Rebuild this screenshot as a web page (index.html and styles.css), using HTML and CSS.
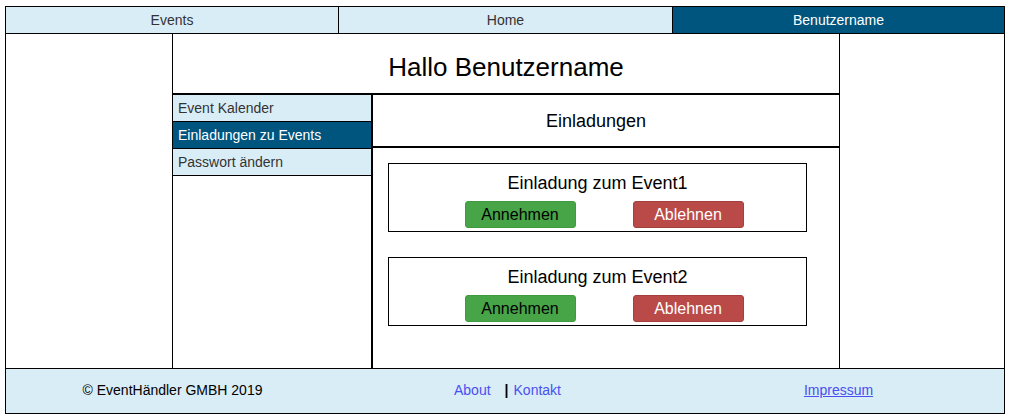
FILE: index.html
```html
<!DOCTYPE html>
<html lang="de">
<head>
<meta charset="utf-8">
<title>Einladungen</title>
<link rel="stylesheet" href="styles.css">
</head>
<body>
<div class="page">
  <nav class="topnav">
    <a class="nav-item">Events</a>
    <a class="nav-item">Home</a>
    <a class="nav-item active">Benutzername</a>
  </nav>
  <div class="main">
    <div class="side-col"></div>
    <div class="center">
      <h1 class="greeting">Hallo Benutzername</h1>
      <div class="body-row">
        <div class="sidebar">
          <a class="menu-item">Event Kalender</a>
          <a class="menu-item active">Einladungen zu Events</a>
          <a class="menu-item">Passwort ändern</a>
        </div>
        <div class="content">
          <h2 class="content-title">Einladungen</h2>
          <div class="cards">
            <div class="card">
              <div class="card-title">Einladung zum Event1</div>
              <div class="card-actions">
                <button class="btn btn-accept">Annehmen</button>
                <button class="btn btn-decline">Ablehnen</button>
              </div>
            </div>
            <div class="card">
              <div class="card-title">Einladung zum Event2</div>
              <div class="card-actions">
                <button class="btn btn-accept">Annehmen</button>
                <button class="btn btn-decline">Ablehnen</button>
              </div>
            </div>
          </div>
        </div>
      </div>
    </div>
    <div class="side-col right"></div>
  </div>
  <footer class="footer">
    <div class="foot-col">© EventHändler GMBH 2019</div>
    <div class="foot-col links">
      <a class="foot-link">About</a>
      <span class="sep">|</span>
      <a class="foot-link">Kontakt</a>
    </div>
    <div class="foot-col"><a class="foot-link underline">Impressum</a></div>
  </footer>
</div>
</body>
</html>
```

FILE: styles.css
```css
* { box-sizing: border-box; }
html, body { background: #fff; }
body {
  margin: 0;
  padding: 6px 9px 0 5px;
  font-family: "Liberation Sans", Arial, sans-serif;
  color: #000;
}
.page {
  width: 1000px;
  border: 1px solid #000;
}
.topnav {
  display: grid;
  grid-template-columns: 333px 334px 331px;
  height: 27px;
  border-bottom: 1px solid #000;
}
.nav-item {
  display: flex;
  align-items: center;
  justify-content: center;
  background: #d9edf7;
  color: #333;
  font-size: 14px;
  border-right: 1px solid #000;
}
.nav-item.active {
  background: #00557f;
  color: #fff;
  border-right: none;
}
.main {
  display: grid;
  grid-template-columns: 167px 667px 164px;
  height: 334px;
}
.side-col { border-right: 1px solid #000; }
.side-col.right { border-right: none; }
.center {
  border-right: 1px solid #000;
  display: flex;
  flex-direction: column;
}
.greeting {
  margin: 0;
  height: 61px;
  border-bottom: 2px solid #000;
  font-size: 26px;
  font-weight: normal;
  display: flex;
  align-items: center;
  justify-content: center;
  padding-top: 8px;
}
.body-row {
  display: flex;
  flex: 1;
}
.sidebar {
  width: 200px;
  border-right: 2px solid #000;
  display: flex;
  flex-direction: column;
}
.menu-item {
  height: 27px;
  background: #d9edf7;
  color: #333;
  font-size: 14px;
  padding-left: 5px;
  display: flex;
  align-items: center;
  border-bottom: 1px solid #000;
}
.menu-item.active {
  background: #00557f;
  color: #fff;
}
.content {
  flex: 1;
  display: flex;
  flex-direction: column;
}
.content-title {
  margin: 0;
  height: 53px;
  border-bottom: 2px solid #000;
  font-size: 18px;
  font-weight: normal;
  display: flex;
  align-items: center;
  justify-content: center;
  padding-right: 20px;
  padding-top: 1px;
}
.cards {
  padding: 15px 0 0 15px;
  display: flex;
  flex-direction: column;
  gap: 25px;
}
.card {
  width: 419px;
  height: 69px;
  border: 1px solid #000;
  padding-top: 9px;
  display: flex;
  flex-direction: column;
  align-items: center;
}
.card-title {
  font-size: 18px;
  line-height: 21px;
}
.card-actions {
  margin-top: 7px;
  display: flex;
  gap: 57px;
  padding-left: 13px;
}
.btn {
  width: 111px;
  height: 27px;
  font-family: "Liberation Sans", Arial, sans-serif;
  font-size: 16px;
  border-radius: 3px;
  padding: 0;
  cursor: pointer;
}
.btn-accept {
  background: #47a447;
  border: 1px solid #3f9a3f;
  color: #000;
}
.btn-decline {
  background: #b94a48;
  border: 1px solid #a43f3d;
  color: #fff;
}
.footer {
  display: grid;
  grid-template-columns: 333px 334px 331px;
  height: 45px;
  border-top: 1px solid #000;
  background: #d9edf7;
  font-size: 14px;
}
.foot-col {
  display: flex;
  align-items: center;
  justify-content: center;
  color: #000;
  padding-bottom: 2px;
}
.links { padding-left: 3px; }
.foot-link { color: #4a4ff0; }
.sep {
  font-weight: bold;
  margin: 0 5px 0 14px;
  color: #000;
}
.underline { text-decoration: underline; }
```
